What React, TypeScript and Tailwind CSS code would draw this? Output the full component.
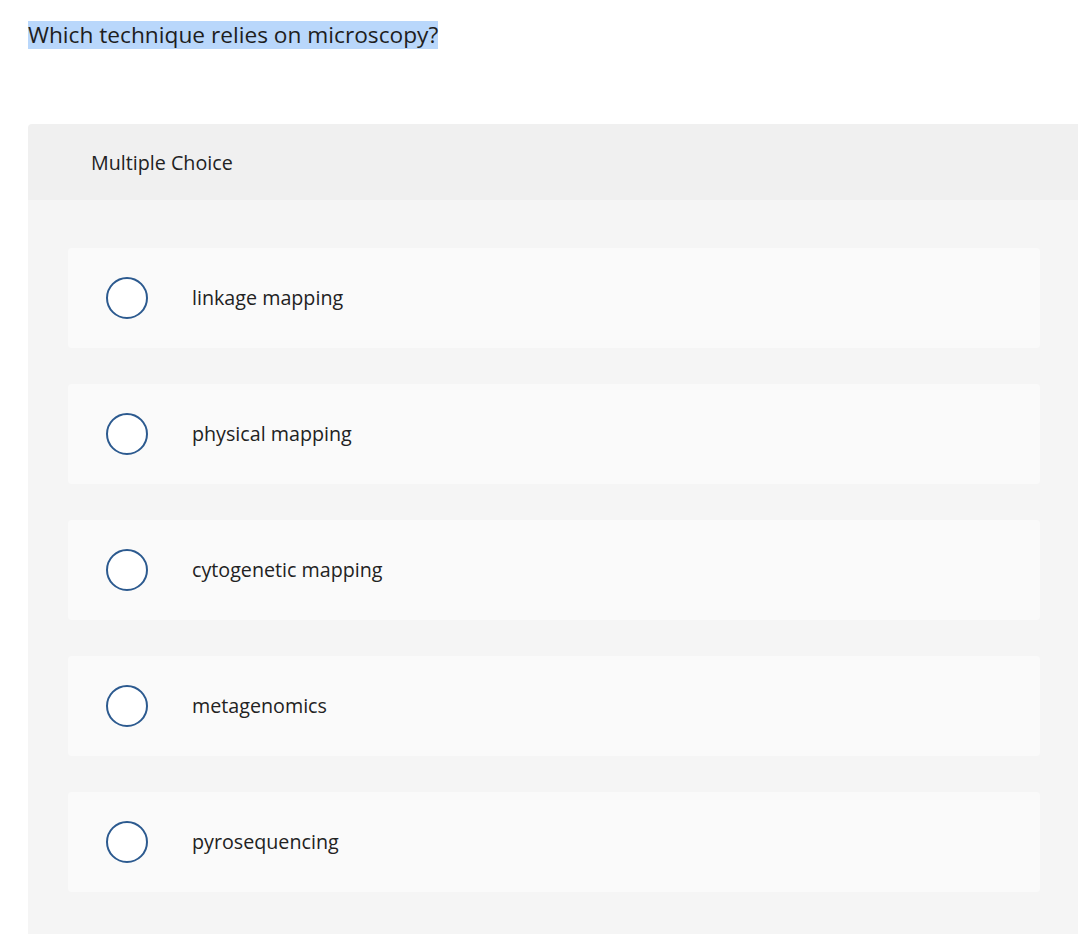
const OPTIONS = [
  'linkage mapping',
  'physical mapping',
  'cytogenetic mapping',
  'metagenomics',
  'pyrosequencing',
];

export default function App() {
  return (
    <div className="min-h-[934px] bg-white overflow-hidden text-[#222]" style={{ fontFamily: '"Open Sans", Lato, sans-serif' }}>
      {/* Question */}
      <div className="pl-[28px] pt-[21px] h-[124px]">
        <span className="inline-block bg-[#b9d7fb] text-[22.7px] leading-[28px] h-[28px] text-[#1e1e1e]">
          Which technique relies on microscopy?
        </span>
      </div>

      {/* Answer panel */}
      <div className="ml-[28px] rounded-tl-[4px] overflow-hidden">
        <div className="h-[76px] bg-[#f0f0f0] flex items-center pl-[63px] pt-[2px] text-[19.7px]">
          Multiple Choice
        </div>
        <div className="bg-[#f5f5f5] pt-[48px] pb-[42px] pl-[40px] pr-[38px] flex flex-col gap-[36px]">
          {OPTIONS.map((label) => (
            <div key={label} className="h-[100px] bg-[#fafafa] rounded-[4px] flex items-center pl-[38px]">
              <span className="w-[42px] h-[42px] rounded-full border-2 border-[#2c5a8f] bg-white shrink-0" />
              <span className="ml-[44px] text-[19.7px]">{label}</span>
            </div>
          ))}
        </div>
      </div>
    </div>
  );
}
